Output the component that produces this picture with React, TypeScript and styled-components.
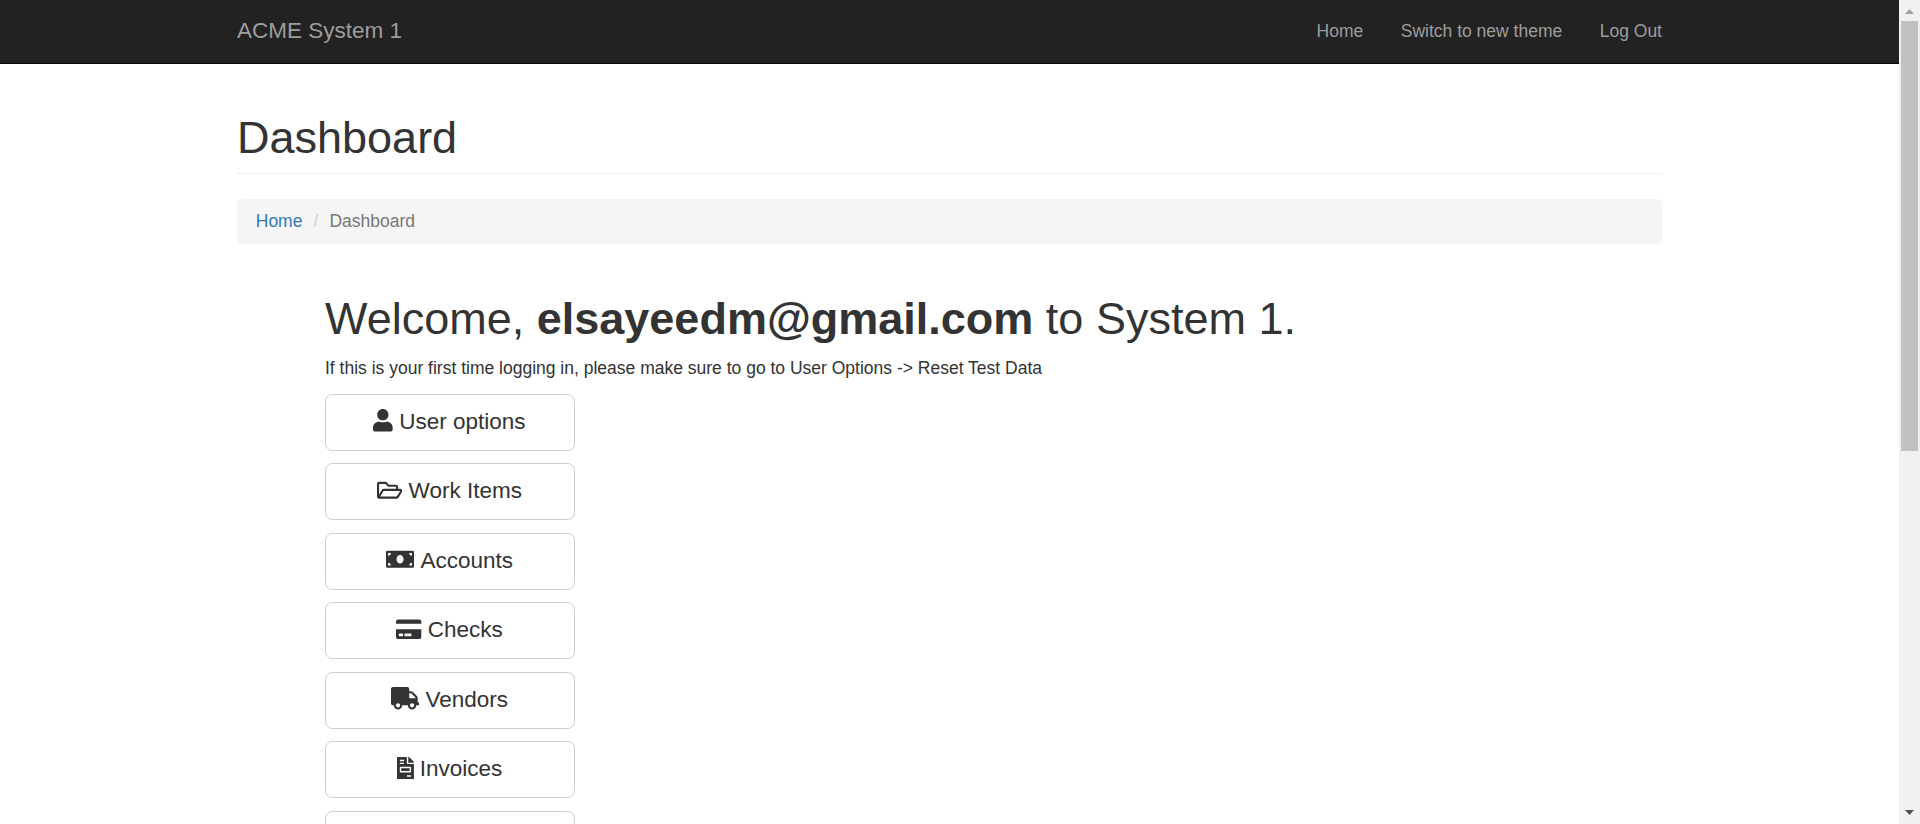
import React from "react";
import styled, { createGlobalStyle } from "styled-components";
import { FaUser, FaRegFolderOpen, FaMoneyBill, FaCreditCard, FaTruck, FaFileInvoice } from "react-icons/fa";
import type { IconType } from "react-icons";

const GlobalStyle = createGlobalStyle`
  *, *::before, *::after { box-sizing: border-box; }
  html, body { margin: 0; height: 100%; overflow: hidden; }
  body {
    font-family: "Liberation Sans", Arial, Helvetica, sans-serif;
    font-size: 17.5px;
    line-height: 25px;
    color: #333;
    background: #fff;
  }
`;

const Window = styled.div`
  display: flex;
  height: 824px;
  overflow: hidden;
`;

const Page = styled.div`
  flex: 1;
  min-width: 0;
  overflow: hidden;
`;

const Navbar = styled.nav`
  height: 64px;
  background: #222;
  border-bottom: 1px solid #080808;
`;

const Container = styled.div`
  width: 1425px;
  margin-left: 237px;
`;

const NavContent = styled(Container)`
  display: flex;
  justify-content: space-between;
  align-items: center;
  height: 62px;
`;

const Brand = styled.a`
  padding-bottom: 1px;
  font-size: 22.5px;
  color: #9d9d9d;
`;

const NavLinks = styled.div`
  display: flex;
  gap: 37.5px;
`;

const NavLink = styled.a`
  color: #9d9d9d;
`;

const PageTitle = styled.h1`
  margin: 49px 0 25px;
  padding-bottom: 10.5px;
  border-bottom: 1px solid #eee;
  font-size: 45px;
  font-weight: 400;
  line-height: 49.5px;
`;

const Breadcrumb = styled.div`
  display: flex;
  height: 44.75px;
  padding: 9.5px 18.75px;
  border-radius: 5px;
  background: #f5f5f5;
  color: #777;
`;

const Crumb = styled.a`
  color: #337ab7;
`;

const Separator = styled.span`
  width: 27px;
  text-align: center;
  color: #ccc;
`;

const Main = styled.main`
  padding: 49.75px 0 0 88px;
`;

const Welcome = styled.h1`
  margin: 0 0 13px;
  font-size: 45px;
  font-weight: 400;
  line-height: 49.5px;
`;

const Hint = styled.p`
  margin: 0 0 12.75px;
`;

const Actions = styled.div`
  display: flex;
  flex-direction: column;
  gap: 12.5px;
`;

const ActionButton = styled.button`
  display: flex;
  justify-content: center;
  align-items: center;
  gap: 6.25px;
  flex: none;
  width: 250px;
  height: 57px;
  padding: 0 1px 1.5px 0;
  border: 1px solid #ccc;
  border-radius: 7.5px;
  background: #fff;
  color: #333;
  font-family: inherit;
  font-size: 22.5px;
  line-height: 30px;
`;

const IconSlot = styled.span<{ $width: number }>`
  display: flex;
  flex: none;
  width: ${({ $width }) => $width}px;
  padding-bottom: 2px;

  svg {
    flex: none;
    width: 100%;
    height: 22.5px;
  }
`;

const ScrollTrack = styled.div`
  display: flex;
  flex-direction: column;
  align-items: center;
  justify-content: space-between;
  width: 21px;
  background: #f1f1f1;
`;

const ScrollThumb = styled.div`
  flex: none;
  width: 17px;
  height: 430px;
  margin-bottom: auto;
  background: #c1c1c1;
`;

const ScrollArrow = styled.svg`
  flex: none;
  width: 21px;
  height: 21px;
`;

const actions: { label: string; icon: IconType; width: number }[] = [
  { label: "User options", icon: FaUser, width: 19.7 },
  { label: "Work Items", icon: FaRegFolderOpen, width: 25.3 },
  { label: "Accounts", icon: FaMoneyBill, width: 28.1 },
  { label: "Checks", icon: FaCreditCard, width: 25.3 },
  { label: "Vendors", icon: FaTruck, width: 28.1 },
  { label: "Invoices", icon: FaFileInvoice, width: 16.9 },
];

export default function App() {
  return (
    <>
      <GlobalStyle />
      <Window>
        <Page>
          <Navbar>
            <NavContent>
              <Brand>ACME System 1</Brand>
              <NavLinks>
                <NavLink>Home</NavLink>
                <NavLink>Switch to new theme</NavLink>
                <NavLink>Log Out</NavLink>
              </NavLinks>
            </NavContent>
          </Navbar>
          <Container>
            <PageTitle>Dashboard</PageTitle>
            <Breadcrumb>
              <Crumb>Home</Crumb>
              <Separator>/</Separator>
              <span>Dashboard</span>
            </Breadcrumb>
            <Main>
              <Welcome>
                Welcome, <b>elsayeedm@gmail.com</b> to System 1.
              </Welcome>
              <Hint>
                If this is your first time logging in, please make sure to go to User Options -&gt; Reset Test Data
              </Hint>
              <Actions>
                {actions.map(({ label, icon: Icon, width }) => (
                  <ActionButton key={label}>
                    <IconSlot $width={width}>
                      <Icon />
                    </IconSlot>
                    {label}
                  </ActionButton>
                ))}
                <ActionButton />
              </Actions>
            </Main>
          </Container>
        </Page>
        <ScrollTrack>
          <ScrollArrow viewBox="0 0 21 21">
            <path d="M6 14 L10.5 9 L15 14 Z" fill="#a3a3a3" />
          </ScrollArrow>
          <ScrollThumb />
          <ScrollArrow viewBox="0 0 21 21">
            <path d="M6 7 L15 7 L10.5 12 Z" fill="#505050" />
          </ScrollArrow>
        </ScrollTrack>
      </Window>
    </>
  );
}
